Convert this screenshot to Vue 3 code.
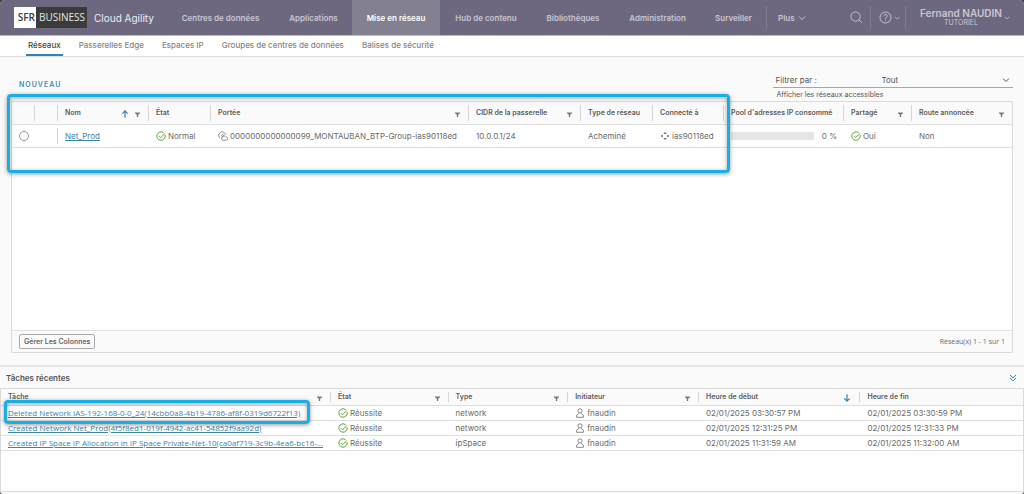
<script setup>
import { ref } from 'vue'

const nav = ['Centres de données', 'Applications', 'Mise en réseau', 'Hub de contenu', 'Bibliothèques', 'Administration', 'Surveiller']
const tabs = ['Réseaux', 'Passerelles Edge', 'Espaces IP', 'Groupes de centres de données', 'Balises de sécurité']
const networkColumns = [
  { label: '', key: 'pick' },
  { label: '', key: 'expand' },
  { label: 'Nom', key: 'name', sort: 'up', filter: true },
  { label: 'État', key: 'state' },
  { label: 'Portée', key: 'scope', filter: true },
  { label: 'CIDR de la passerelle', key: 'cidr', filter: true },
  { label: 'Type de réseau', key: 'type' },
  { label: 'Connecté à', key: 'link' },
  { label: 'Pool d\'adresses IP consommé', key: 'pool' },
  { label: 'Partagé', key: 'shared', filter: true },
  { label: 'Route annoncée', key: 'route', filter: true }
]
const taskColumns = [
  { label: 'Tâche', key: 'task', filter: true },
  { label: 'État', key: 'status', filter: true },
  { label: 'Type', key: 'kind', filter: true },
  { label: 'Initiateur', key: 'owner', filter: true },
  { label: 'Heure de début', key: 'start', sort: 'down' },
  { label: 'Heure de fin', key: 'end' }
]
const tasks = [
  { name: 'Deleted Network IAS-192-168-0-0_24(14cbb0a8-4b19-4786-af8f-0319d6722f13)', type: 'network', start: '02/01/2025 03:30:57 PM', end: '02/01/2025 03:30:59 PM' },
  { name: 'Created Network Net_Prod(4f5f8ed1-019f-4942-ac41-54852f9aa92d)', type: 'network', start: '02/01/2025 12:31:25 PM', end: '02/01/2025 12:31:33 PM' },
  { name: 'Created IP Space IP Allocation in IP Space Private-Net-10(ca0af719-3c9b-4ea6-bc16-…', type: 'ipSpace', start: '02/01/2025 11:31:59 AM', end: '02/01/2025 11:32:00 AM' }
]
const filter = ref('Tout')
const picked = ref('')
</script>

<template>
  <div class="app">
    <svg class="defs" aria-hidden="true">
      <symbol id="funnel" viewBox="0 0 6 6"><path d="M0 0.5H6V1.6L3.8 3.2V6H2.2V3.2L0 1.6Z" fill="currentColor" /></symbol>
      <symbol id="arrow" viewBox="0 0 8 8"><path d="M4 7.8V1M1.3 3.6L4 .9 6.7 3.6" fill="none" stroke="currentColor" stroke-width="1.2" /></symbol>
      <symbol id="check" viewBox="0 0 10 10"><path d="M9.1 4A4.2 4.2 0 1 1 7.6 1.7M2.8 5.1L4.5 6.8 8.8 2.5" fill="none" stroke="currentColor" stroke-width="1" /></symbol>
      <symbol id="person" viewBox="0 0 10 10"><path d="M5 .8A2 2 0 0 1 5 5 2 2 0 0 1 5 .8M3.8 5.4L1.6 7.2V9.3H8.4V7.2L6.2 5.4" fill="none" stroke="currentColor" stroke-width=".9" /></symbol>
      <symbol id="chevron" viewBox="0 0 8 8"><path d="M1 2.5L4 5.5 7 2.5" fill="none" stroke="currentColor" /></symbol>
    </svg>

    <header class="top">
      <div class="brand">
        <span class="logo"><span class="sfr">SFR</span><span class="biz">BUSINESS</span></span>
        <span class="product">Cloud Agility</span>
      </div>
      <nav class="main-nav">
        <a v-for="item in nav" :key="item" href="#" :class="{ active: item === 'Mise en réseau' }">{{ item }}</a>
        <button class="plus" type="button">Plus <svg><use href="#chevron" /></svg></button>
      </nav>
      <div class="tools">
        <button type="button" aria-label="Rechercher">
          <svg class="search" viewBox="0 0 14 14"><circle cx="6" cy="6" r="5" fill="none" stroke="currentColor" /><path d="M9.6 9.6L13 13" stroke="currentColor" /></svg>
        </button>
        <button class="help" type="button" aria-label="Aide">
          <svg class="question" viewBox="0 0 13 13"><circle cx="6.5" cy="6.5" r="5.5" fill="none" stroke="currentColor" /><path d="M4.8 5.2C4.8 2.9 8.3 3 8.2 5.1 8.1 6.3 6.5 6.2 6.5 7.8M6.5 8.7V9.7" fill="none" stroke="currentColor" /></svg>
          <svg class="tiny"><use href="#chevron" /></svg>
        </button>
        <button class="user" type="button">
          <span class="who"><span class="full">Fernand NAUDIN</span><span class="org">TUTORIEL</span></span>
          <svg class="tiny"><use href="#chevron" /></svg>
        </button>
      </div>
    </header>

    <nav class="tabs">
      <a v-for="tab in tabs" :key="tab" href="#" :class="{ active: tab === 'Réseaux' }">{{ tab }}</a>
    </nav>

    <main class="content">
      <div class="toolbar">
        <button class="new" type="button">NOUVEAU</button>
        <div class="filter">
          <div class="filter-line">
            <label for="filter">Filtrer par :</label>
            <select id="filter" v-model="filter"><option>Tout</option></select>
            <svg><use href="#chevron" /></svg>
          </div>
          <p>Afficher les réseaux accessibles</p>
        </div>
      </div>

      <section class="card">
        <table class="networks">
          <colgroup><col v-for="c in networkColumns" :key="c.key" :class="c.key" /></colgroup>
          <thead>
            <tr>
              <th v-for="c in networkColumns" :key="c.key" scope="col">
                <div class="head">
                  <span>{{ c.label }}</span>
                  <svg v-if="c.sort" class="sort"><use href="#arrow" /></svg>
                  <svg v-if="c.filter" class="funnel"><use href="#funnel" /></svg>
                </div>
              </th>
            </tr>
          </thead>
          <tbody>
            <tr>
              <td><input v-model="picked" type="radio" name="network" value="Net_Prod" aria-label="Net_Prod" /></td>
              <td></td>
              <td class="name"><a href="#">Net_Prod</a></td>
              <td><span class="cell"><svg class="ok"><use href="#check" /></svg>Normal</span></td>
              <td>
                <span class="cell">
                  <svg class="scope" viewBox="0 0 10 10"><path d="M2 6.4A2 2 0 0 1 1.2 3 3 3 0 0 1 6.6 2.1 2 2 0 0 1 8 3.6M2.8 5L5.6 2.6M3.2 6.6L6.4 3.8M4.6 9.2A1.6 1.6 0 0 1 4.6 6.2 2.1 2.1 0 0 1 8.4 6.2 1.5 1.5 0 0 1 8.4 9.2Z" fill="none" stroke="currentColor" stroke-width=".8" /></svg>
                  0000000000000099_MONTAUBAN_BTP-Group-ias90118ed
                </span>
              </td>
              <td>10.0.0.1/24</td>
              <td>Acheminé</td>
              <td>
                <span class="cell">
                  <svg class="router" viewBox="0 0 10 10"><path d="M5 .8L6.7 2.9H3.3ZM5 9.2L6.7 7.1H3.3ZM.4 5L2.8 3.4V6.6ZM9.6 5L7.2 3.4V6.6Z" fill="currentColor" /></svg>
                  ias90118ed
                </span>
              </td>
              <td><div class="pool"><span class="bar"></span><span>0 %</span></div></td>
              <td><span class="cell"><svg class="ok"><use href="#check" /></svg>Oui</span></td>
              <td>Non</td>
            </tr>
          </tbody>
        </table>
        <footer>
          <button type="button">Gérer Les Colonnes</button>
          <span>Réseau(x) 1 - 1 sur 1</span>
        </footer>
        <div class="mark mark-networks"></div>
      </section>
    </main>

    <section class="recent">
      <header>
        <h2>Tâches récentes</h2>
        <button type="button" aria-label="Réduire">
          <svg viewBox="0 0 8 8"><path d="M1 1L4 3.8 7 1M1 4L4 6.8 7 4" fill="none" stroke="currentColor" /></svg>
        </button>
      </header>
      <div class="task-box">
        <table class="tasks">
          <colgroup><col v-for="c in taskColumns" :key="c.key" :class="c.key" /></colgroup>
          <thead>
            <tr>
              <th v-for="c in taskColumns" :key="c.key" scope="col">
                <div class="head">
                  <span>{{ c.label }}</span>
                  <svg v-if="c.sort" class="sort down"><use href="#arrow" /></svg>
                  <svg v-if="c.filter" class="funnel"><use href="#funnel" /></svg>
                </div>
              </th>
            </tr>
          </thead>
          <tbody>
            <tr v-for="t in tasks" :key="t.name">
              <td class="task-name"><a href="#">{{ t.name }}</a></td>
              <td><span class="cell"><svg class="ok"><use href="#check" /></svg>Réussite</span></td>
              <td>{{ t.type }}</td>
              <td><span class="cell"><svg class="person"><use href="#person" /></svg>fnaudin</span></td>
              <td>{{ t.start }}</td>
              <td>{{ t.end }}</td>
            </tr>
          </tbody>
        </table>
        <div class="mark mark-task"></div>
      </div>
    </section>
  </div>
</template>

<style>
body { background: #3a3a3a; }
</style>

<style scoped>
* { box-sizing: border-box; }
.app {
  min-height: 100vh;
  display: flex;
  flex-direction: column;
  overflow: hidden;
  border-radius: 5px 5px 3px 3px;
  background: #fafafa;
  color: #6a6a6a;
  font: 8px/12px Inter, "Noto Sans", sans-serif;
}
.defs { position: absolute; width: 0; height: 0; }
svg { display: block; flex: none; width: 8px; height: 8px; }
button { border: 0; padding: 0; background: none; color: inherit; font: inherit; cursor: pointer; }
a { color: inherit; text-decoration: none; }

.top {
  display: grid;
  grid-template-columns: 166fr 674fr 184fr;
  height: 36px;
  border-bottom: 1px solid #bdbbc5;
  background: #6d6880;
  color: #c9c6d1;
}
.brand { display: flex; align-items: center; gap: 7px; padding-left: 14px; }
.logo { display: flex; width: 73px; height: 21px; background: #3b3b3b; font: 10px/21px "Open Sans", sans-serif; }
.sfr { width: 22px; padding-right: 1px; background: #fff; color: #3b3b3b; text-align: right; font-weight: 600; }
.biz { padding-left: 3px; color: #e6e6e6; }
.product { color: #eeedf2; font-size: 10px; white-space: nowrap; }
.main-nav { display: grid; grid-template-columns: 109fr 77fr 88fr 92fr 82fr 87fr 65fr 74fr; font-weight: 600; }
.main-nav a { display: flex; align-items: center; justify-content: center; white-space: nowrap; }
.main-nav .active { background: #828091; color: #fff; }
.plus { display: flex; align-items: center; gap: 3px; margin: 6px 0; padding-left: 11px; border-left: 1px solid #817d91; font-weight: 600; }
.tools { display: grid; grid-template-columns: 30fr 35fr 119fr; padding: 6px 0; }
.tools button { display: flex; align-items: center; }
.tools .search { width: 13px; height: 13px; margin-left: 10px; }
.help { gap: 2px; padding-left: 8px; border-left: 1px solid #817d91; }
.question { width: 13px; height: 13px; }
.tools .tiny { width: 6px; height: 6px; }
.user { justify-content: center; gap: 2px; border-left: 1px solid #817d91; }
.who { display: flex; flex-direction: column; align-items: center; }
.full { font-size: 10px; font-weight: 600; line-height: 11px; white-space: nowrap; }
.org { font-size: 7px; line-height: 8px; }

.tabs { display: flex; gap: 18px; height: 21px; padding-left: 28px; border-bottom: 1px solid #dedede; background: #fff; color: #858585; font-weight: 500; }
.tabs a { position: relative; line-height: 19px; white-space: nowrap; }
.tabs .active { color: #444; }
.tabs .active::after { content: ""; position: absolute; left: -2px; right: -2px; bottom: 0; height: 2px; background: #2d87b0; }

.content { flex: 1; display: flex; flex-direction: column; padding: 16px 11px 12px; }
.toolbar { display: flex; justify-content: space-between; height: 28px; }
.new { align-self: flex-start; margin: 6px 0 0 8px; color: #3f8db3; font-size: 7px; font-weight: 600; letter-spacing: 1px; }
.filter { width: 24%; color: #555; }
.filter-line { display: flex; align-items: center; height: 15px; padding: 0 3px; border-bottom: 1px solid #9da9b0; }
.filter-line label { flex: 0 0 106px; }
.filter-line select { flex: 1; border: 0; padding: 0; appearance: none; background: none; color: inherit; font: inherit; }
.filter p { margin: 1px 0 0 4px; font-size: 7px; }

.card { position: relative; flex: 1; display: flex; flex-direction: column; border: 1px solid #dadada; border-radius: 1px; background: #fff; }
table { width: 100%; border-collapse: collapse; table-layout: fixed; }
th, td { position: relative; padding: 0 0 0 8px; border-bottom: 1px solid #dfdfdf; text-align: left; font-weight: 400; white-space: nowrap; }
th { background: #fafafa; color: #5c5c5c; font-size: 7px; font-weight: 600; }
th + th::before { content: ""; position: absolute; left: 0; top: 3px; bottom: 3px; width: 1px; background: #d6d6d6; }
.head { display: flex; align-items: center; gap: 6px; padding-right: 8px; }
.head span { flex: 1; }
.head .funnel { width: 5px; height: 5px; margin-top: 3px; color: #777; }
.head .sort { width: 8px; height: 8px; margin-top: 2px; color: #2d87b0; }
.head .down { margin-top: 3px; transform: rotate(180deg); }
td a { color: #3c84a8; text-decoration: underline; }
.cell { display: flex; align-items: center; gap: 2px; }
.ok { width: 10px; height: 10px; color: #5aa532; }
.scope, .router, .person { width: 10px; height: 10px; color: #7a7a7a; }

.networks th { height: 22px; }
.networks td { height: 23px; }
.networks .pick { width: 2.2%; }
.networks .expand { width: 2.3%; }
.networks .name { width: 9.1%; }
.networks .state { width: 6.2%; }
.networks col.scope { width: 25.8%; }
.networks .cidr { width: 11.2%; }
.networks .type { width: 7.2%; }
.networks .link { width: 7.1%; }
.networks .pool { width: auto; }
.networks .shared { width: 6.8%; }
.networks .route { width: 10.1%; }
td.name::before { content: ""; position: absolute; left: 0; top: 3px; bottom: 3px; width: 1px; background: #d6d6d6; }
input[type="radio"] { display: block; width: 10px; height: 10px; margin: 0 0 0 -1px; border: 1px solid #8b979e; border-radius: 50%; appearance: none; background: #fff; }
div.pool { display: flex; align-items: center; justify-content: space-between; padding-right: 6px; }
.bar { width: 83px; height: 8px; background: #e6e6e6; }

.card footer { display: flex; align-items: center; justify-content: space-between; height: 22px; margin-top: auto; padding: 0 7px; border-top: 1px solid #e2e2e2; background: #fafafa; font: 7px/12px "Open Sans", sans-serif; }
.card footer button { height: 15px; padding: 0 4px; border: 1px solid #a9a9a9; border-radius: 2px; color: #666; font: 600 7px/12px Inter, sans-serif; }

.recent { border-top: 2px solid #e6e6e6; padding-bottom: 2px; }
.recent header { display: flex; align-items: center; justify-content: space-between; height: 21px; padding: 0 7px 0 6px; }
h2 { margin: 0; color: #555; font-size: 8px; font-weight: 600; }
.recent header button { color: #2d87b0; }
.task-box { position: relative; min-height: 104px; border: 1px solid #dadada; background: #fff; }
.tasks th { height: 16px; line-height: 14px; }
.tasks td { height: 15px; line-height: 14px; }
.task { width: 32.2%; }
.status { width: 11.5%; }
.kind { width: 11.7%; }
.owner { width: 12.8%; }
.start { width: 15.8%; }
.end { width: auto; }
.tasks td:first-child, .tasks th:first-child { padding-left: 7px; }
.task-name { font-family: "Open Sans", sans-serif; }

.mark { position: absolute; border: 3px solid #17afe6; border-radius: 4px; box-shadow: 0 1px 4px rgba(0, 0, 0, .4), inset 0 1px 4px rgba(0, 0, 0, .35); pointer-events: none; }
.mark-networks { left: -5px; top: -8px; width: 72.3%; height: 79px; }
.mark-task { left: 3px; top: 11px; width: 29.9%; height: 24px; }
</style>
